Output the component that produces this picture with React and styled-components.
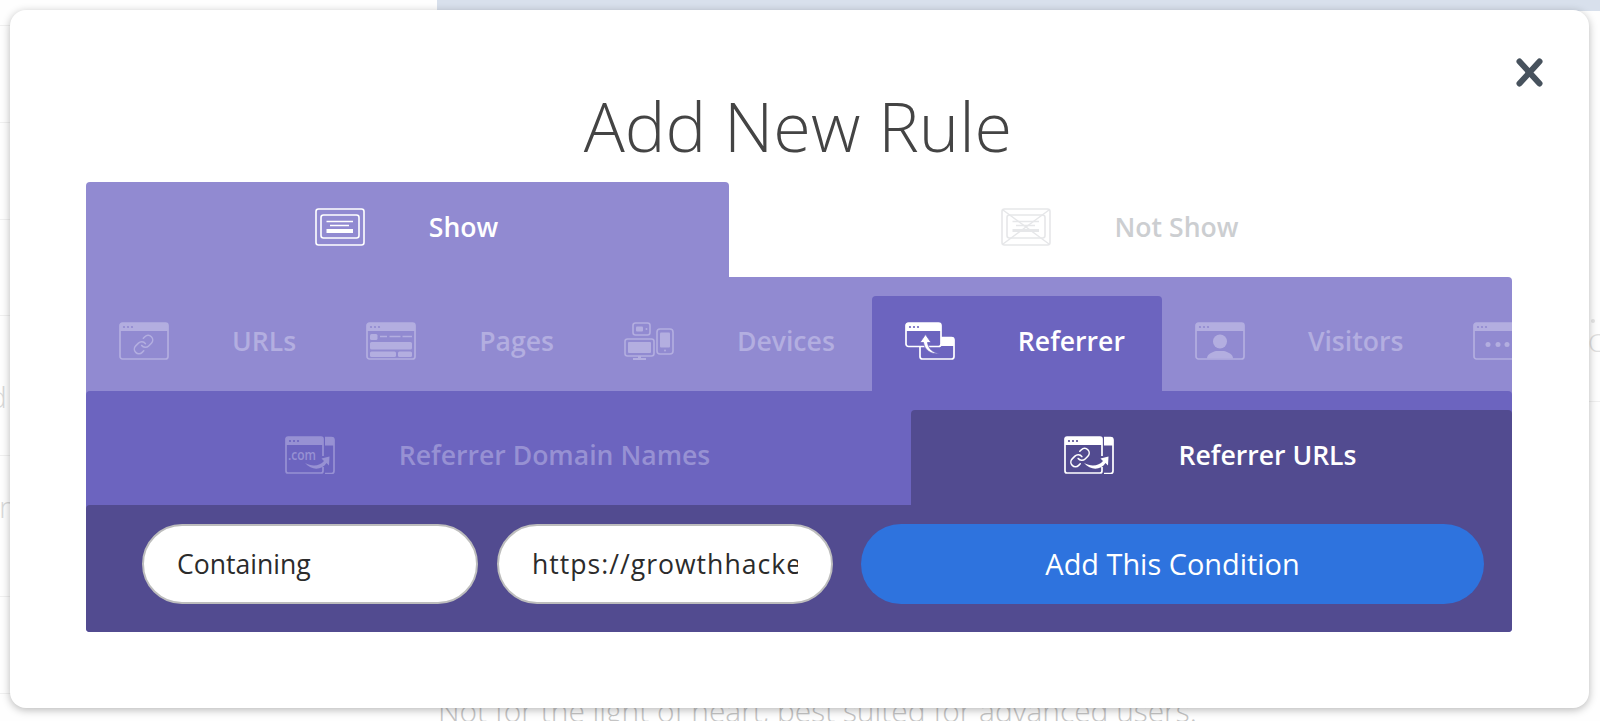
import React from "react";
import styled, { createGlobalStyle } from "styled-components";

const GlobalStyle = createGlobalStyle`
  html, body {
    margin: 0;
    padding: 0;
    background: #fff;
    font-family: "Open Sans", "Liberation Sans", sans-serif;
  }
`;

const Page = styled.div`
  position: relative;
  display: grid;
  grid-template-columns: 437px 1fr 11px;
  width: 100%;
  height: 100vh;
  overflow: hidden;
  background: #fefefe;
`;

const SideColumn = styled.div`
  display: flex;
  flex-direction: column;
`;

const SideRow = styled.div`
  height: ${(props) => props.$height}px;
  box-sizing: border-box;
  border-bottom: 1px solid #f0f0f0;
  padding-top: ${(props) => props.$top || 0}px;
  text-indent: ${(props) => props.$indent || 0}px;
  font-size: 30px;
  font-weight: 300;
  line-height: 30px;
  color: #d8d8d8;
`;

const CenterColumn = styled.div`
  display: flex;
  flex-direction: column;
  justify-content: space-between;
`;

const TopBand = styled.div`
  height: 11px;
  background: #d8e0ec;
`;

const Caption = styled.p`
  margin: 0 0 -6px 1px;
  font-size: 29.9px;
  font-weight: 300;
  line-height: 32px;
  white-space: nowrap;
  color: #c4c4c4;
`;

const RightColumn = styled.div`
  display: flex;
  flex-direction: column;
  align-items: flex-start;
  padding: 0;
  margin-left: -1px;
`;

const RightBand = styled(TopBand)`
  align-self: stretch;
`;

const RightDot = styled.span`
  width: 4px;
  height: 4px;
  margin: 308px 0 0 3px;
  border-radius: 50%;
  background: #e6e6e6;
`;

const RightLetter = styled.span`
  margin-top: 6px;
  padding-bottom: 46px;
  align-self: stretch;
  border-bottom: 1px solid #f0f0f0;
  font-size: 26px;
  font-weight: 300;
  line-height: 26px;
  color: #e0e0e0;
`;

const Modal = styled.div`
  position: absolute;
  top: 10px;
  left: 10px;
  width: 1579px;
  height: 698px;
  box-sizing: border-box;
  padding: 0 77px 0 76px;
  border-radius: 16px;
  background: #fff;
  box-shadow: 0 2px 9px rgba(0, 0, 0, 0.28);
`;

const CloseButton = styled.button`
  position: absolute;
  top: 48px;
  right: 46px;
  display: flex;
  width: 27px;
  height: 29px;
  padding: 0;
  border: 0;
  background: none;
  color: #47525d;
`;

const Title = styled.h1`
  height: 172px;
  margin: 0;
  box-sizing: border-box;
  padding: 68px 2px 0 0;
  font-size: 68.4px;
  font-weight: 300;
  line-height: 96px;
  text-align: center;
  color: #444;
`;

const RuleTabs = styled.div`
  display: grid;
  grid-template-columns: 643px 1fr;
  height: 95px;
`;

const RuleTab = styled.div`
  display: flex;
  align-items: center;
  justify-content: center;
  gap: 64px;
  padding: 0 2px 5px 0;
  box-sizing: border-box;
  border-radius: 4px 4px 0 0;
  background: ${(props) => (props.$active ? "#918ad1" : "transparent")};
  color: ${(props) => (props.$active ? "#fff" : "#ccced1")};
  --tab-bg: ${(props) => (props.$active ? "#918ad1" : "#fff")};
`;

const RuleIcon = styled.span`
  display: flex;
  color: ${(props) => (props.$active ? "#fff" : "#e6e7e9")};
`;

const TabLabel = styled.span`
  font-size: 26.6px;
  font-weight: 600;
  line-height: 38px;
  white-space: nowrap;
`;

const CategoryLevel = styled.div`
  border-radius: 0 4px 4px 4px;
  background: #918ad1;
`;

const CategoryRow = styled.div`
  display: flex;
  height: 114px;
  box-sizing: border-box;
  padding-top: 19px;
  overflow: hidden;
`;

const CategoryTab = styled.div`
  display: flex;
  flex: none;
  align-items: flex-start;
  gap: 63px;
  padding: 26px 37px 0 33px;
  border-radius: 4px 4px 0 0;
  background: ${(props) => (props.$active ? "#6c64bf" : "transparent")};
  color: ${(props) => (props.$active ? "#fff" : "#b3aee0")};
  --tab-bg: ${(props) => (props.$active ? "#6c64bf" : "#918ad1")};
`;

const SubLevel = styled.div`
  border-radius: 4px;
  background: #6c64bf;
`;

const SubRow = styled.div`
  display: grid;
  grid-template-columns: 825px 1fr;
  height: 114px;
  box-sizing: border-box;
  padding-top: 19px;
`;

const SubTab = styled.div`
  display: flex;
  align-items: flex-start;
  justify-content: center;
  gap: 64px;
  padding: 26px 2px 0 0;
  border-radius: 4px 4px 0 0;
  background: ${(props) => (props.$active ? "#524b90" : "transparent")};
  color: ${(props) => (props.$active ? "#fff" : "#9791d3")};
  --tab-bg: ${(props) => (props.$active ? "#524b90" : "#6c64bf")};
`;

const ConditionBar = styled.div`
  display: flex;
  align-items: center;
  gap: 19px;
  height: 127px;
  box-sizing: border-box;
  padding: 0 28px 10px 56px;
  border-radius: 4px 0 4px 4px;
  background: #524b90;
`;

const ConditionInput = styled.input`
  width: 336px;
  height: 80px;
  box-sizing: border-box;
  padding: 0 33px;
  border: 2px solid #bdbdbd;
  border-radius: 40px;
  outline: none;
  background: #fff;
  font-family: inherit;
  font-size: 26.6px;
  letter-spacing: ${(props) => props.$tracking || 0}px;
  color: #2b2b2b;
`;

const AddButton = styled.button`
  flex: 1;
  height: 80px;
  margin-left: 9px;
  border: 0;
  border-radius: 40px;
  background: #2e73de;
  font-family: inherit;
  font-size: 28.9px;
  color: #fff;
`;

const Svg = ({ children }) => (
  <svg width="50" height="38" viewBox="0 0 50 38" fill="none" stroke="none">
    {children}
  </svg>
);

const HeaderDots = () => (
  <>
    <circle cx="5" cy="5" r="1.1" fill="var(--tab-bg)" />
    <circle cx="9" cy="5" r="1.1" fill="var(--tab-bg)" />
    <circle cx="13" cy="5" r="1.1" fill="var(--tab-bg)" />
  </>
);

const WindowFrame = () => (
  <>
    <rect x="1" y="1" width="48" height="36" rx="2.5" stroke="currentColor" strokeWidth="1.7" />
    <path d="M1 9V3a2 2 0 0 1 2-2h44a2 2 0 0 1 2 2v6z" fill="currentColor" />
    <HeaderDots />
  </>
);

// two interlocked links, drawn in a 24 box and scaled down around their centre
const Chain = ({ x, y }) => (
  <g transform={`translate(${x - 11} ${y - 11}) scale(0.92)`} stroke="currentColor" strokeWidth="1.7" strokeLinecap="round">
    <path d="M10 13a5 5 0 0 0 7.54.54l3-3a5 5 0 0 0-7.07-7.07l-1.72 1.71" />
    <path d="M14 11a5 5 0 0 0-7.54-.54l-3 3a5 5 0 0 0 7.07 7.07l1.71-1.71" />
  </g>
);

const ShowIcon = () => (
  <Svg>
    <rect x="1" y="1" width="48" height="36" rx="2.5" stroke="currentColor" strokeWidth="1.6" />
    <rect x="6" y="7" width="38" height="23" rx="2.5" stroke="currentColor" strokeWidth="1.6" />
    <path d="M11.5 13.5H38M15 17.5H34" stroke="currentColor" strokeWidth="1.5" />
    <rect x="11.5" y="21" width="26.5" height="4" fill="currentColor" />
  </Svg>
);

const NotShowIcon = () => (
  <Svg>
    <rect x="1" y="1" width="48" height="36" rx="2.5" stroke="currentColor" strokeWidth="1.6" />
    <rect x="6" y="7" width="38" height="23" rx="2.5" stroke="currentColor" strokeWidth="1.6" />
    <path d="M2 2L48 36M48 2L2 36" stroke="currentColor" strokeWidth="1.5" />
    <path d="M11.5 13.5H38M15 17.5H34" stroke="currentColor" strokeWidth="1.5" />
    <rect x="11.5" y="21" width="26.5" height="3" fill="currentColor" />
  </Svg>
);

const UrlsIcon = () => (
  <Svg>
    <WindowFrame />
    <Chain x={24.5} y={22.5} />
  </Svg>
);

const PagesIcon = () => (
  <Svg>
    <WindowFrame />
    <rect x="4" y="12" width="7.5" height="6" rx="1.5" fill="currentColor" />
    <path d="M14 14.5h7M23.5 14.5h11M36.5 14.5h9.5" stroke="currentColor" strokeWidth="1.7" />
    <rect x="4" y="20" width="42" height="7.5" rx="1.5" fill="currentColor" />
    <rect x="4" y="29.5" width="26" height="5.5" rx="1.5" fill="currentColor" />
    <rect x="32" y="29.5" width="14" height="5.5" rx="1.5" fill="currentColor" />
  </Svg>
);

const DevicesIcon = () => (
  <Svg>
    <rect x="9" y="1" width="17" height="12" rx="2.5" stroke="currentColor" strokeWidth="1.6" />
    <rect x="12" y="4.5" width="7" height="5" rx="1" fill="currentColor" />
    <circle cx="22.5" cy="7" r="1" fill="currentColor" />
    <rect x="33" y="7" width="16" height="25" rx="3" stroke="currentColor" strokeWidth="1.6" />
    <rect x="36" y="10.5" width="10" height="15" rx="1" fill="currentColor" />
    <circle cx="41" cy="28.5" r="1" fill="currentColor" />
    <rect x="1" y="17" width="29" height="17" rx="2.5" stroke="currentColor" strokeWidth="1.6" />
    <rect x="4" y="20" width="23" height="11" rx="1" fill="currentColor" />
    <path d="M14 34h3v2h5v2H9v-2h5z" fill="currentColor" />
  </Svg>
);

const ReferrerIcon = () => (
  <Svg>
    <rect x="15" y="15.5" width="34" height="21.5" rx="2.5" stroke="currentColor" strokeWidth="1.7" />
    <path d="M15 24v-6.5a2.5 2.5 0 0 1 2.5-2.5h29a2.5 2.5 0 0 1 2.5 2.5V24z" fill="currentColor" />
    <rect x="1" y="1" width="35" height="23.5" rx="2.5" fill="var(--tab-bg)" stroke="currentColor" strokeWidth="1.7" />
    <path d="M1 9V3a2 2 0 0 1 2-2h31a2 2 0 0 1 2 2v6z" fill="currentColor" />
    <HeaderDots />
    <path d="M35 31.5C28 31 23.5 27 22.5 20.5h3.5L20.5 12.5 15 20.5h3.5C19.5 28 26 33 35 31.5z" fill="currentColor" stroke="var(--tab-bg)" strokeWidth="0.8" />
  </Svg>
);

const VisitorsIcon = () => (
  <Svg>
    <WindowFrame />
    <circle cx="25" cy="19.5" r="7" fill="currentColor" />
    <path d="M12 36.5c0-4 4-6 9-7.5h8c5 1.5 9 3.5 9 7.5z" fill="currentColor" />
  </Svg>
);

const MoreIcon = () => (
  <Svg>
    <WindowFrame />
    <circle cx="15" cy="22.5" r="2.5" fill="currentColor" />
    <circle cx="25" cy="22.5" r="2.5" fill="currentColor" />
    <circle cx="34" cy="22.5" r="2.5" fill="currentColor" />
  </Svg>
);

const TargetFrame = ({ children }) => (
  <Svg>
    <path d="M40 1.5h6.5A2.5 2.5 0 0 1 49 4v31a2.5 2.5 0 0 1-2.5 2.5H40" stroke="currentColor" strokeWidth="1.7" />
    <path d="M40 1h6.5A2.5 2.5 0 0 1 49 3.5V9.5H40z" fill="currentColor" />
    <path d="M38 20V3a2 2 0 0 0-2-2H3a2 2 0 0 0-2 2v32a2 2 0 0 0 2 2h33a2 2 0 0 0 2-2v-4" stroke="currentColor" strokeWidth="1.7" />
    <path d="M1 9V3a2 2 0 0 1 2-2h33a2 2 0 0 1 2 2v6z" fill="currentColor" />
    <HeaderDots />
    {children}
    <path d="M20 27C27 31 35 30 39 25l-2.5-2.5 8-2-.5 9-2.5-2.5C37 34 27 35 20 27z" fill="currentColor" />
  </Svg>
);

const IconText = styled.text`
  font-family: "Open Sans", sans-serif;
  font-size: 14px;
  font-weight: 600;
  fill: currentColor;
`;

const DomainIcon = () => (
  <TargetFrame>
    <IconText x="3" y="24" textLength="28" lengthAdjust="spacingAndGlyphs">.com</IconText>
  </TargetFrame>
);

const ReferrerUrlIcon = () => (
  <TargetFrame>
    <Chain x={16} y={21.5} />
  </TargetFrame>
);

const CloseIcon = () => (
  <svg width="27" height="29" viewBox="0 0 27 29" fill="none">
    <path d="M3.5 3.5L23.5 25.5M23.5 3.5L3.5 25.5" stroke="currentColor" strokeWidth="6" strokeLinecap="round" />
  </svg>
);

const categories = [
  { label: "URLs", Icon: UrlsIcon },
  { label: "Pages", Icon: PagesIcon },
  { label: "Devices", Icon: DevicesIcon },
  { label: "Referrer", Icon: ReferrerIcon, active: true },
  { label: "Visitors", Icon: VisitorsIcon },
  { Icon: MoreIcon },
];

const App = () => (
  <>
    <GlobalStyle />
    <Page>
      <SideColumn>
        <SideRow $height={26} />
        <SideRow $height={97} />
        <SideRow $height={97} />
        <SideRow $height={96} />
        <SideRow $height={140} $top={66} $indent={-11}>d</SideRow>
        <SideRow $height={141} $top={36} $indent={-1}>r</SideRow>
        <SideRow $height={97} />
      </SideColumn>
      <CenterColumn>
        <TopBand />
        <Caption>Not for the light of heart, best suited for advanced users.</Caption>
      </CenterColumn>
      <RightColumn>
        <RightBand />
        <RightDot />
        <RightLetter>C</RightLetter>
      </RightColumn>
      <Modal>
        <CloseButton aria-label="Close">
          <CloseIcon />
        </CloseButton>
        <Title>Add New Rule</Title>
        <RuleTabs>
          <RuleTab $active>
            <RuleIcon $active>
              <ShowIcon />
            </RuleIcon>
            <TabLabel>Show</TabLabel>
          </RuleTab>
          <RuleTab>
            <RuleIcon>
              <NotShowIcon />
            </RuleIcon>
            <TabLabel>Not Show</TabLabel>
          </RuleTab>
        </RuleTabs>
        <CategoryLevel>
          <CategoryRow>
            {categories.map(({ label, Icon, active }) => (
              <CategoryTab key={label || "more"} $active={active}>
                <Icon />
                {label && <TabLabel>{label}</TabLabel>}
              </CategoryTab>
            ))}
          </CategoryRow>
          <SubLevel>
            <SubRow>
              <SubTab>
                <DomainIcon />
                <TabLabel>Referrer Domain Names</TabLabel>
              </SubTab>
              <SubTab $active>
                <ReferrerUrlIcon />
                <TabLabel>Referrer URLs</TabLabel>
              </SubTab>
            </SubRow>
            <ConditionBar>
              <ConditionInput readOnly value="Containing" />
              <ConditionInput readOnly $tracking={1} value="https://growthhackers.com" />
              <AddButton>Add This Condition</AddButton>
            </ConditionBar>
          </SubLevel>
        </CategoryLevel>
      </Modal>
    </Page>
  </>
);

export default App;
